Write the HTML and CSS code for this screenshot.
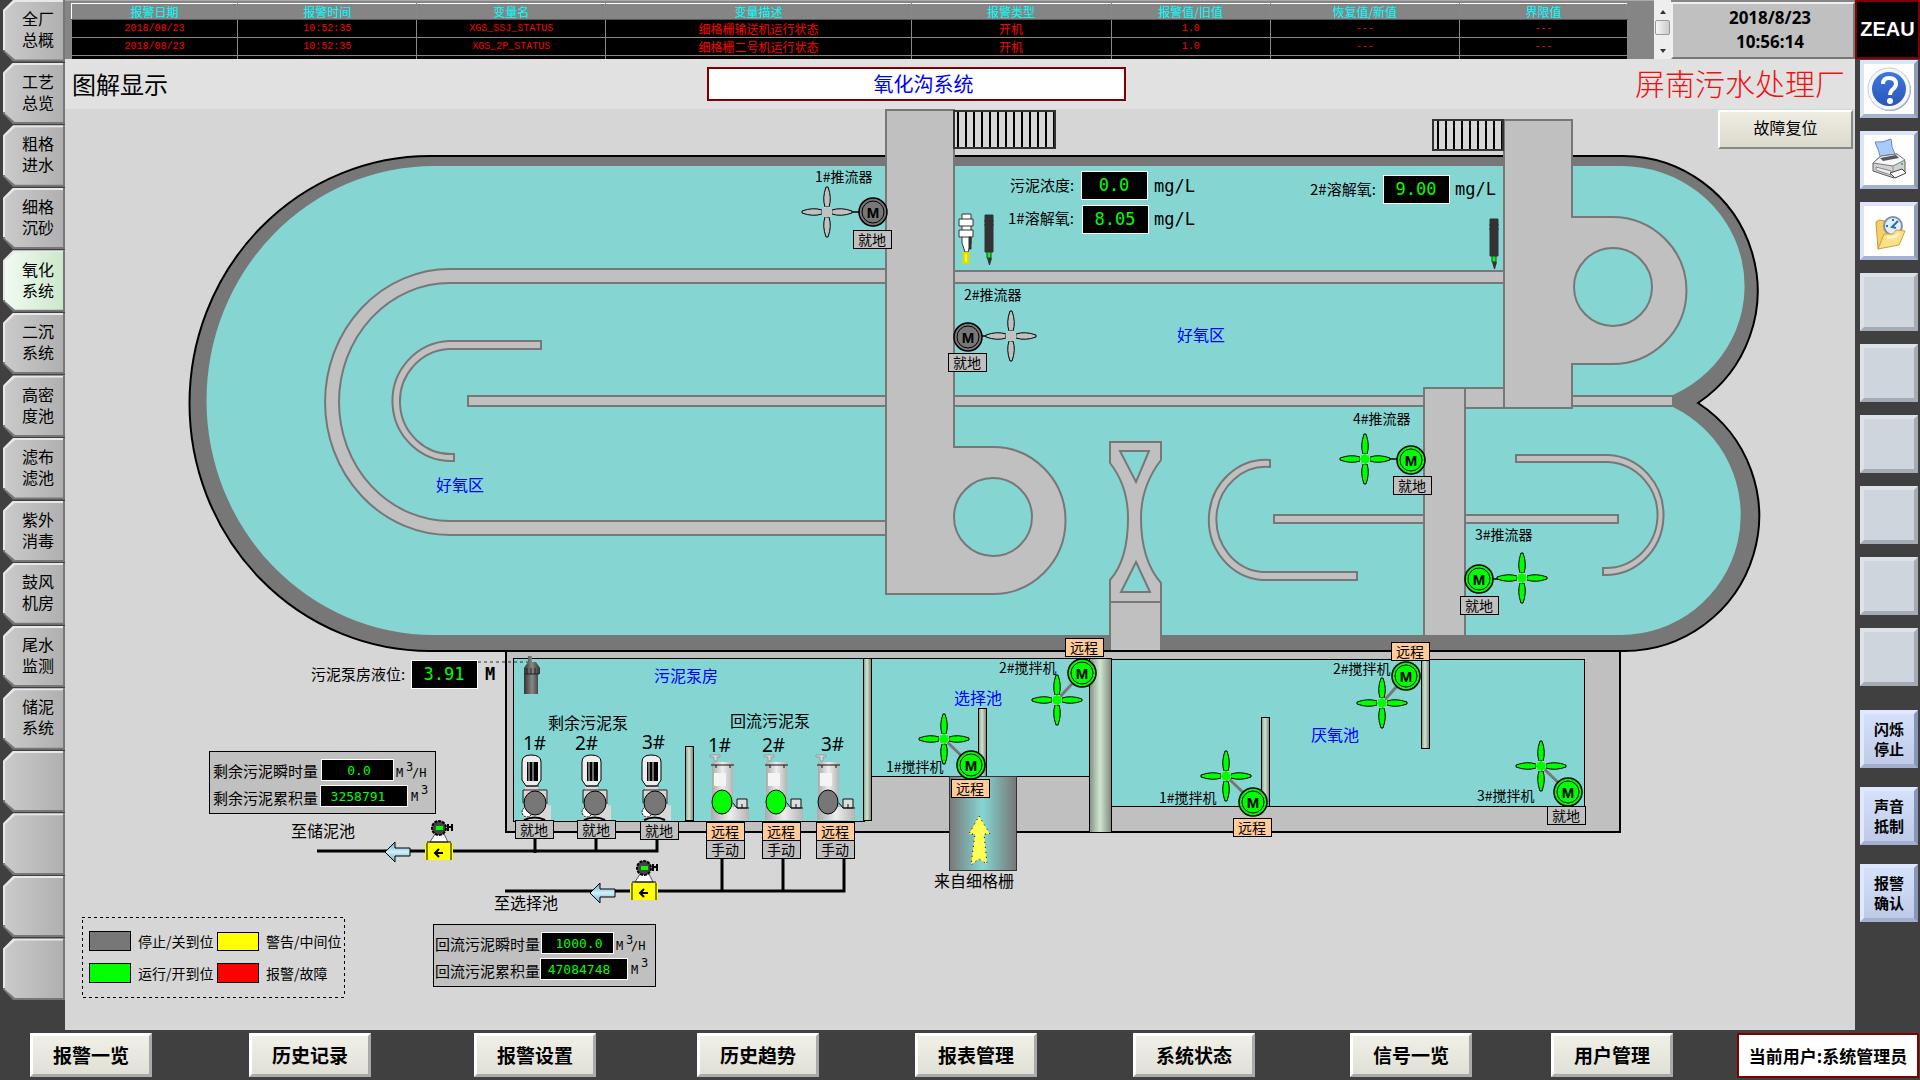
FILE: index.html
```html
<!DOCTYPE html>
<html lang="zh-CN">
<head>
<meta charset="utf-8">
<title>氧化沟系统</title>
<link rel="stylesheet" href="styles.css">
</head>
<body>
<nav class="tabs">
<a href="#"><span>全厂<br>总概</span></a>
<a href="#"><span>工艺<br>总览</span></a>
<a href="#"><span>粗格<br>进水</span></a>
<a href="#"><span>细格<br>沉砂</span></a>
<a href="#" class="active"><span>氧化<br>系统</span></a>
<a href="#"><span>二沉<br>系统</span></a>
<a href="#"><span>高密<br>度池</span></a>
<a href="#"><span>滤布<br>滤池</span></a>
<a href="#"><span>紫外<br>消毒</span></a>
<a href="#"><span>鼓风<br>机房</span></a>
<a href="#"><span>尾水<br>监测</span></a>
<a href="#"><span>储泥<br>系统</span></a>
<a href="#"><span></span></a>
<a href="#"><span></span></a>
<a href="#"><span></span></a>
<a href="#"><span></span></a>
</nav>

<header class="top">
<div class="alarms">
<table>
<colgroup><col class="c1"><col class="c2"><col class="c3"><col class="c4"><col class="c5"><col class="c6"><col class="c7"><col class="c8"></colgroup>
<thead>
<tr><th>报警日期</th><th>报警时间</th><th>变量名</th><th>变量描述</th><th>报警类型</th><th>报警值/旧值</th><th>恢复值/新值</th><th>界限值</th></tr>
</thead>
<tbody>
<tr><td>2018/08/23</td><td>10:52:35</td><td>XGS_SSJ_STATUS</td><td class="zh">细格栅输送机运行状态</td><td class="zh">开机</td><td>1.0</td><td>---</td><td>---</td></tr>
<tr><td>2018/08/23</td><td>10:52:35</td><td>XGS_2P_STATUS</td><td class="zh">细格栅二号机运行状态</td><td class="zh">开机</td><td>1.0</td><td>---</td><td>---</td></tr>
<tr><td>2018/08/23</td><td>10:52:35</td><td>XGS_1P_STATUS</td><td class="zh">细格栅一号机运行状态</td><td class="zh">开机</td><td>1.0</td><td>---</td><td>---</td></tr>
</tbody>
</table>
</div>
<div class="scroll"><i class="up"></i><i class="thumb"></i><i class="down"></i></div>
<div class="clock">2018/8/23<br>10:56:14</div>
</header>

<aside class="side">
<div class="logo">ZEAU</div>
<div class="tools">
<button class="pic" aria-label="帮助">
<svg viewBox="0 0 48 48">
<defs><linearGradient id="hb" x2="0" y2="1"><stop offset="0" stop-color="#3c78e0"/><stop offset="1" stop-color="#2b56b8"/></linearGradient></defs>
<circle cx="25" cy="25" r="21" fill="#9aa0ac"/>
<circle cx="24" cy="24" r="21" fill="#f4f7fc" stroke="#c4ccdc"/>
<circle cx="24" cy="24" r="17" fill="url(#hb)"/>
<path d="M18 19 Q18 13 24 13 Q31 13 31 19 Q31 22 27 25 Q25 27 25 30" fill="none" stroke="#fff" stroke-width="4"/>
<circle cx="25" cy="36" r="3" fill="#fff"/>
</svg>
</button>
<button class="pic" aria-label="打印">
<svg viewBox="0 0 48 48">
<path d="M10 6 Q18 7 26 3 Q26 12 31 20 L16 24 Q14 14 10 6Z" fill="#a9cbfa" stroke="#5f86d0"/>
<path d="M8 27 L16 20 L32 18 L40 25 V36 L29 42 L8 35Z" fill="#d0d1d5" stroke="#5c5e62"/>
<path d="M8 27 L16 20 L32 18 L40 24 L28 30Z" fill="#f6f6f7" stroke="#77797d"/>
<path d="M15 22 L31 19 L34 22 L18 25Z" fill="#55585e"/>
<path d="M28 30 V41" stroke="#8d8f94"/>
<path d="M11 31 L26 35 V39 L11 34Z" fill="#eeeef0" stroke="#888"/>
<path d="M25 37 L37 33 L41 37 L30 42Z" fill="#fff" stroke="#444"/>
<circle cx="37" cy="28" r="1" fill="#1fb53a"/>
</svg>
</button>
<button class="pic" aria-label="历史">
<svg viewBox="0 0 48 48">
<path d="M11 15 L14 13 L20 14 L21 17 L33 15 V32 L13 42Z" fill="#f5d069" stroke="#c99a2c"/>
<circle cx="28" cy="19" r="9" fill="#dff0fb" stroke="#7f90a4" stroke-width="2"/>
<path d="M33 14 L27 20 L31 21 M28 12 V14 M21 19 H23" fill="none" stroke="#2a6fae" stroke-width="2"/>
<path d="M13 42 L19 27 L28 27 L31 23 L40 24 L34 38Z" fill="#fbe08a" stroke="#d0a137"/>
<path d="M22 30 Q30 32 34 26" fill="none" stroke="#fff4c8" stroke-width="3"/>
</svg>
</button>
<button></button>
<button></button>
<button></button>
<button></button>
<button></button>
<button></button>
</div>
<div class="tools acts">
<button class="blue">闪烁<br>停止</button>
<button class="blue">声音<br>抵制</button>
<button class="blue">报警<br>确认</button>
</div>
</aside>

<main class="screen">
<div class="bar">
<h1>图解显示</h1>
<h2>氧化沟系统</h2>
<p>屏南污水处理厂</p>
</div>
<button class="reset">故障复位</button>

<svg class="plant" viewBox="65 109 1790 921">
<defs>
<linearGradient id="post"><stop offset="0" stop-color="#808a80"/><stop offset=".5" stop-color="#d0e8d0"/><stop offset="1" stop-color="#808a80"/></linearGradient>
<linearGradient id="inlet"><stop offset="0" stop-color="#777"/><stop offset=".5" stop-color="#85d6d3"/><stop offset="1" stop-color="#777"/></linearGradient>
<linearGradient id="steel"><stop offset="0" stop-color="#aaa"/><stop offset=".5" stop-color="#eee"/><stop offset="1" stop-color="#b4b4b4"/></linearGradient>
<linearGradient id="probe"><stop offset="0" stop-color="#333"/><stop offset=".5" stop-color="#888"/><stop offset="1" stop-color="#333"/></linearGradient>
<linearGradient id="arr" x2="0" y2="1"><stop offset="0" stop-color="#5aa3c4"/><stop offset=".5" stop-color="#d2f1fa"/><stop offset="1" stop-color="#5aa3c4"/></linearGradient>
<pattern id="grate" x="957" y="0" width="8" height="40" patternUnits="userSpaceOnUse"><path d="M1 0V40" stroke="#000" stroke-width="2"/></pattern>

<g id="blade"><path d="M-2 -5 Q-5 -14 -1 -25 H1 Q5 -14 2 -5Z" stroke="#000"/></g>
<g id="fan">
<use href="#blade"/><use href="#blade" transform="rotate(90)"/><use href="#blade" transform="rotate(180)"/><use href="#blade" transform="rotate(270)"/>
<circle r="5" stroke="#cfe8cf" stroke-dasharray="2 2"/>
</g>
<g id="motor">
<circle r="14" stroke="#000" stroke-width="1.5"/>
<circle r="11" stroke="#000"/>
</g>
<g id="pumpA">
<path d="M525 786 H538 V790 H548 V806 L551 805 V820 H524 V790 H525Z" fill="#d8d8d8"/>
<path d="M522 762 Q522 755 531 755 Q541 755 541 762 V780 L537 786 H526 L522 780Z" fill="#eee" stroke="#000"/>
<path d="M527 762 H538 V781 H527Z" fill="#000"/>
<path d="M529 762 V781 M533 762 V781" stroke="#ddd"/>
<path d="M523 803 V790 H547 V804 M526 786 H539" fill="none" stroke="#222"/>
<circle cx="527" cy="812" r="5" fill="#fff" stroke="#000" stroke-dasharray="2 1"/>
<path d="M524 820 Q535 815 545 820" fill="none" stroke="#000" stroke-width="2"/>
<ellipse cx="535" cy="803" rx="11" ry="12" stroke="#000"/>
</g>
<g id="pumpB">
<path d="M710 755 H720 V757 H717 V761 H714 V757 H710Z" fill="#ddd" stroke="#999"/>
<path d="M712 762 H733 V820 H712Z" fill="url(#steel)"/>
<path d="M711 765 H734 M716 765 V768 M730 765 V768" stroke="#111"/>
<path d="M714 773 H726 V786 H714Z" fill="#f4f4f4"/>
<path d="M711 807 H749 V820 H711Z" fill="url(#steel)"/>
<path d="M737 799 H747 V808 H737Z" fill="#ddd" stroke="#111"/>
<path d="M733 803 L737 808 H749 M742 804 V808" fill="none" stroke="#111"/>
<ellipse cx="722" cy="802" rx="10" ry="12" stroke="#000"/>
</g>
<g id="meter">
<path d="M-4 -18 H5 L9 -10 H-9Z" fill="#fff" stroke="#555"/>
<circle cx="0" cy="-24" r="7" fill="#444" stroke="#000" stroke-width="2" stroke-dasharray="3 1"/>
<rect x="-3" y="-26" width="7" height="4" fill="#0f0"/>
<path d="M9 -28 V-21 M13 -28 V-21 M9 -25 H13" stroke="#000" stroke-width="2"/>
<rect x="-14" y="-9" width="28" height="17" fill="#ff0"/>
<path d="M-12 -9 V8 M12 -9 V8 M-12 -10 H12" stroke="#000"/>
<path d="M4 1 H-4 M0 -3 L-4 1 L0 5" fill="none" stroke="#000" stroke-width="2"/>
</g>
<g id="flow"><path d="M0 0 L10 -10 V-4 H25 V4 H10 V10Z" fill="url(#arr)" stroke="#000"/></g>
<g id="do">
<path d="M-4 0 H4 V37 H-4Z M-5 6 H5 M-5 10 H5" fill="#333" stroke="#333"/>
<path d="M-2 37 H2 V43 H-2Z" fill="#0f0" stroke="#333"/>
<path d="M-2 43 H3 L1 50 H0Z" fill="#333"/>
</g>
</defs>

<!-- lower basins -->
<rect x="506" y="650" width="1114" height="182" fill="#c0c0c0" stroke="#000" stroke-width="2"/>
<rect class="basin" x="513" y="658" width="351" height="163"/>
<rect class="basin" x="871" y="658" width="218" height="118"/>
<rect class="basin" x="1111" y="659" width="473" height="147"/>

<!-- oxidation ditch -->
<path d="M430 156 H1623 A135 135 0 0 1 1698 403 A135 135 0 0 1 1623 651 H430 A240 247 0 0 1 430 156Z" fill="#777" stroke="#000" stroke-width="2"/>
<path d="M434 166 H1621 A123 120 0 0 1 1673 395 V407 A120 120 0 0 1 1620 635 H434 A227 234 0 0 1 434 166Z" fill="#85d6d3"/>
<g class="wall">
<path d="M886 269 H450 A125 133 0 0 0 450 535 H886 V521 H450 A111 119 0 0 1 450 283 H886Z"/>
<path d="M541 341 H449 A59 60 0 0 0 454 461 V454 A51 52 0 0 1 449 349 H541Z"/>
<path d="M468 396 H1673 V406 H468Z"/>
<path d="M954 271 H1504 V283 H954Z"/>
<path d="M1270 460 A57 60 0 0 0 1262 580 H1357 V572 H1262 A49 52 0 0 1 1270 467Z"/>
<path d="M1274 515 H1618 V523 H1274Z"/>
<path d="M1516 455 H1608 A58 60 0 0 1 1603 575 V568 A52 53 0 0 0 1608 462 H1516Z"/>
<path d="M886 110 H954 V447 H993 A72 73 0 0 1 993 594 H886Z"/>
<path d="M1465 388 H1504 V408 H1465Z"/>
<path d="M1504 120 H1572 V217 H1612 A74 73 0 0 1 1612 364 H1572 V408 H1504Z"/>
<path d="M1424 388 H1465 V636 H1424Z"/>
<path d="M1110 442 H1161 V460 Q1141 486 1141 518 Q1141 560 1161 583 V650 H1110 V580 Q1128 560 1128 518 Q1128 486 1110 463Z"/>
<path d="M1110 602 H1161"/>
</g>
<path d="M1504 388 V408 M1505 408 H1572" stroke="#777" stroke-width="2"/>
<path d="M1571 219 V363" stroke="#c0c0c0" stroke-width="4"/>
<path d="M1111 636 H1160 V650 H1111Z" fill="#c0c0c0"/>
<path d="M1109 636 V650 M1162 636 V650 M1424 636 H1465" stroke="#777" stroke-width="2"/>
<path d="M430 651 H1623" stroke="#000" stroke-width="2"/>
<g class="hole">
<circle cx="993" cy="517" r="39"/>
<circle cx="1613" cy="287" r="39"/>
<path d="M1120 451 H1149 L1136 482Z"/>
<path d="M1136 562 L1150 592 H1121Z"/>
</g>
<path d="M954 111 H1055 V148 H954Z M1433 120 H1503 V150 H1433Z" fill="url(#grate)" stroke="#333" stroke-width="2"/>

<!-- partitions -->
<g class="post">
<rect x="863" y="658" width="8" height="162"/>
<rect x="685" y="746" width="8" height="74"/>
<rect x="978" y="708" width="8" height="68"/>
<rect x="1089" y="658" width="22" height="174"/>
<rect x="1261" y="717" width="8" height="89"/>
<rect x="1421" y="659" width="8" height="89"/>
</g>
<rect x="949" y="776" width="67" height="94" fill="url(#inlet)" stroke="#333"/>
<path d="M979 816 L990 834 H984 L987 864 L979 859 L971 865 L975 834 H969Z" fill="#ff5" stroke="#000" stroke-dasharray="1 4"/>

<!-- pipes -->
<path d="M317 851 H657 V838 M535 838 V853 M596 838 V851" class="pipe"/>
<path d="M505 891 H844 V858 M722 858 V891 M783 858 V891" class="pipe"/>
<use href="#flow" x="385" y="852"/>
<use href="#flow" x="590" y="893"/>
<use href="#meter" x="439" y="852"/>
<use href="#meter" x="644" y="892"/>

<!-- level sensor -->
<path d="M478 662 H530" stroke="#333" stroke-dasharray="3 3"/>
<path d="M528 656 H532 V662 H536 L540 668 V674 H538 V694 H524 V674 H524 V668 L528 662Z" fill="url(#probe)"/>
<path d="M525 674 H539 M527 668 V674 M531 668 V674 M535 668 V674" stroke="#222"/>

<!-- probes -->
<use href="#do" x="989" y="215"/>
<use href="#do" x="1494" y="219"/>
<g stroke="#333">
<path d="M962 214 H971 V243 L968 252 H965 L962 243Z" fill="#fff"/>
<path d="M959 219 H973 V226 H959Z M959 230 H973 V237 H959Z" fill="#fff"/>
<path d="M969 237 H971 V249 H969Z" fill="#333"/>
<path d="M962 253 H970 M962 263 H970 M964 253 V263 H968 V253" fill="#ff0" stroke="#dd0" stroke-width="2"/>
</g>

<!-- pumps -->
<g class="off"><use href="#pumpA"/><use href="#pumpA" x="60"/><use href="#pumpA" x="120"/></g>
<g class="on"><use href="#pumpB"/><use href="#pumpB" x="54"/></g>
<g class="off"><use href="#pumpB" x="106"/></g>

<!-- impellers and mixers -->
<path d="M845 212 H860 M982 336 H994 M1383 459 H1397 M1493 579 H1522" stroke="#333" stroke-width="2"/>
<g class="idle"><use href="#fan" x="827" y="212"/><use href="#fan" x="1011" y="336"/></g>
<g class="off"><use href="#motor" x="873" y="212"/><use href="#motor" x="968" y="337"/></g>
<path d="M944 739 L971 765 M1057 700 L1082 673 M1226 776 L1253 802 M1382 703 L1406 676 M1541 766 L1568 792" stroke="#777" stroke-width="3"/>
<g class="on">
<use href="#fan" x="1365" y="459"/><use href="#motor" x="1411" y="460"/>
<use href="#fan" x="1522" y="578"/><use href="#motor" x="1479" y="579"/>
<use href="#fan" x="944" y="739"/><use href="#motor" x="971" y="765"/>
<use href="#fan" x="1057" y="700"/><use href="#motor" x="1082" y="673"/>
<use href="#fan" x="1226" y="776"/><use href="#motor" x="1253" y="802"/>
<use href="#fan" x="1382" y="703"/><use href="#motor" x="1406" y="676"/>
<use href="#fan" x="1541" y="766"/><use href="#motor" x="1568" y="792"/>
</g>
<g class="m">
<text x="873" y="212">M</text><text x="968" y="337">M</text><text x="1411" y="460">M</text><text x="1479" y="579">M</text>
<text x="971" y="765">M</text><text x="1082" y="673">M</text><text x="1253" y="802">M</text><text x="1406" y="676">M</text><text x="1568" y="792">M</text>
</g>

<!-- local / remote tags -->
<g class="tag">
<rect x="853" y="230" width="38" height="18"/><text x="872" y="239">就地</text>
<rect x="948" y="353" width="38" height="18"/><text x="967" y="362">就地</text>
<rect x="1393" y="476" width="38" height="18"/><text x="1412" y="485">就地</text>
<rect x="1460" y="596" width="38" height="18"/><text x="1479" y="605">就地</text>
<rect x="1547" y="806" width="38" height="18"/><text x="1566" y="815">就地</text>
<rect x="515" y="820" width="38" height="18"/><text x="534" y="829">就地</text>
<rect x="577" y="820" width="38" height="18"/><text x="596" y="829">就地</text>
<rect x="640" y="821" width="38" height="18"/><text x="659" y="830">就地</text>
<rect x="706" y="840" width="38" height="18"/><text x="725" y="849">手动</text>
<rect x="762" y="840" width="38" height="18"/><text x="781" y="849">手动</text>
<rect x="816" y="840" width="38" height="18"/><text x="835" y="849">手动</text>
</g>
<g class="tag remote">
<rect x="1065" y="638" width="38" height="18"/><text x="1084" y="647">远程</text>
<rect x="1391" y="642" width="38" height="18"/><text x="1410" y="651">远程</text>
<rect x="951" y="779" width="38" height="18"/><text x="970" y="788">远程</text>
<rect x="1233" y="818" width="38" height="18"/><text x="1252" y="827">远程</text>
<rect x="706" y="822" width="38" height="18"/><text x="725" y="831">远程</text>
<rect x="762" y="822" width="38" height="18"/><text x="781" y="831">远程</text>
<rect x="816" y="822" width="38" height="18"/><text x="835" y="831">远程</text>
</g>

<!-- device names -->
<g class="name">
<text x="815" y="176">1#推流器</text>
<text x="964" y="294">2#推流器</text>
<text x="1353" y="418">4#推流器</text>
<text x="1475" y="534">3#推流器</text>
<text x="999" y="667">2#搅拌机</text>
<text x="886" y="766">1#搅拌机</text>
<text x="1333" y="668">2#搅拌机</text>
<text x="1159" y="797">1#搅拌机</text>
<text x="1477" y="795">3#搅拌机</text>
</g>
<g class="zone">
<text x="1177" y="334">好氧区</text>
<text x="436" y="484">好氧区</text>
<text x="654" y="675">污泥泵房</text>
<text x="954" y="697">选择池</text>
<text x="1311" y="734">厌氧池</text>
</g>
<g class="place">
<text x="548" y="722">剩余污泥泵</text>
<text x="730" y="720">回流污泥泵</text>
<text x="291" y="830">至储泥池</text>
<text x="494" y="902">至选择池</text>
<text x="934" y="880">来自细格栅</text>
</g>
<g class="num">
<text x="523" y="743">1#</text><text x="575" y="743">2#</text><text x="642" y="742">3#</text>
<text x="708" y="745">1#</text><text x="762" y="745">2#</text><text x="821" y="744">3#</text>
</g>

<!-- analog values -->
<g class="label">
<text x="1010" y="184">污泥浓度:</text>
<text x="1008" y="217">1#溶解氧:</text>
<text x="1310" y="188">2#溶解氧:</text>
<text x="311" y="673">污泥泵房液位:</text>
</g>
<g class="unit">
<text x="1154" y="186">mg/L</text>
<text x="1154" y="219">mg/L</text>
<text x="1455" y="189">mg/L</text>
<text x="485" y="674" class="b">M</text>
</g>
<g class="lcd">
<rect x="1081" y="171" width="66" height="28"/><text x="1114" y="185">0.0</text>
<rect x="1082" y="205" width="66" height="28"/><text x="1115" y="219">8.05</text>
<rect x="1383" y="175" width="66" height="28"/><text x="1416" y="189">9.00</text>
<rect x="411" y="660" width="66" height="28"/><text x="444" y="674">3.91</text>
</g>

<!-- sludge flow totals -->
<g class="box">
<rect x="209" y="751" width="226" height="62"/>
<rect x="433" y="924" width="222" height="62"/>
</g>
<g class="label">
<text x="213" y="770">剩余污泥瞬时量</text>
<text x="213" y="797">剩余污泥累积量</text>
<text x="435" y="943">回流污泥瞬时量</text>
<text x="435" y="970">回流污泥累积量</text>
</g>
<g class="lcd small">
<rect x="321" y="759" width="72" height="21"/><text x="359" y="770">0.0</text>
<rect x="320" y="785" width="87" height="21"/><text x="358" y="796">3258791</text>
<rect x="541" y="932" width="72" height="21"/><text x="579" y="943">1000.0</text>
<rect x="540" y="958" width="87" height="21"/><text x="579" y="969">47084748</text>
</g>
<g class="flowunit">
<text x="396" y="773">M</text><text x="406" y="767">3</text><text x="412" y="773">/H</text>
<text x="411" y="797">M</text><text x="421" y="790">3</text>
<text x="616" y="946">M</text><text x="626" y="940">3</text><text x="631" y="946">/H</text>
<text x="631" y="970">M</text><text x="641" y="963">3</text>
</g>

<!-- legend -->
<rect x="82" y="917" width="262" height="80" fill="none" stroke="#000" stroke-dasharray="3 3"/>
<g stroke="#000">
<rect x="89" y="931" width="41" height="19" fill="#777"/>
<rect x="89" y="963" width="41" height="19" fill="#0f0"/>
<rect x="217" y="932" width="41" height="18" fill="#ff0"/>
<rect x="217" y="963" width="41" height="19" fill="#f00"/>
</g>
<g class="name">
<text x="138" y="941">停止/关到位</text>
<text x="138" y="973">运行/开到位</text>
<text x="266" y="941">警告/中间位</text>
<text x="266" y="973">报警/故障</text>
</g>
</svg>
</main>

<footer class="menu">
<button>报警一览</button>
<button>历史记录</button>
<button>报警设置</button>
<button>历史趋势</button>
<button>报表管理</button>
<button>系统状态</button>
<button>信号一览</button>
<button>用户管理</button>
<div class="user">当前用户:系统管理员</div>
</footer>
</body>
</html>
```
FILE: styles.css
```css
* { box-sizing: border-box; }
body {
margin: 0; min-height: 100vh; background: #404040; color: #000;
font-family: "Noto Sans CJK SC", "Liberation Sans", sans-serif; font-size: 16px;
display: grid; grid-template-columns: 65px 1fr 65px; grid-template-rows: 59px 1fr 50px;
grid-template-areas: "tabs top side" "tabs screen side" "menu menu menu";
}
button { font-family: inherit; color: #000; padding: 0; }

/* left tabs */
.tabs { grid-area: tabs; display: flex; flex-direction: column; gap: 1px; padding: 0 0 30px 3px; }
.tabs a {
flex: 1; padding: 2px; display: flex; color: #000; text-decoration: none;
background: linear-gradient(to right, transparent 60px, #777 60px), linear-gradient(#e8e8e8 80%, #777 80%);
clip-path: polygon(10px 0, 100% 0, 100% 100%, 10px 100%, 0 51px, 0 10px);
}
.tabs span {
flex: 1; padding: 0 0 3px 8px; display: flex; align-items: center; justify-content: center;
font-size: 16px; line-height: 21px; background: linear-gradient(to right, #cacaca, #b0b0b0);
clip-path: polygon(10px 0, 100% 0, 100% 100%, 10px 100%, 0 49px, 0 9px);
}
.tabs .active span { background: linear-gradient(to right, #f2faf2, #cbe8cb); }

/* alarm list */
.top { grid-area: top; display: flex; height: 59px; overflow: hidden; background: #858585; }
.alarms { flex: 1; overflow: hidden; padding: 2px 26px 0 6px; height: 59px; border-top: 1px solid #aaa; }
.alarms table { width: 100%; table-layout: fixed; border-collapse: collapse; background: #000; }
.alarms th, .alarms td { padding: 0; border: 1px solid #888; text-align: center; overflow: hidden; white-space: nowrap; }
.alarms th { height: 16px; font-size: 12px; line-height: 14px; font-weight: 400; color: #0ff; background: #858585; border-color: #fff #888 #555 #fff; }
.alarms td { height: 18px; font-family: "Liberation Mono", monospace; font-size: 10px; line-height: 15px; color: #f00; }
.alarms td.zh { font-family: "Noto Sans CJK SC", sans-serif; font-size: 12px; }
.c1 { width: 166px; } .c2 { width: 179px; } .c3 { width: 189px; } .c4 { width: 305px; }
.c5 { width: 200px; } .c6 { width: 159px; } .c7 { width: 189px; } .c8 { width: 168px; }
.scroll { width: 17px; background: #eee; display: flex; flex-direction: column; align-items: center; justify-content: space-between; padding: 10px 0 6px; }
.scroll i { display: block; }
.up { border: 3px solid transparent; border-top: 0; border-bottom: 4px solid #333; }
.down { border: 3px solid transparent; border-bottom: 0; border-top: 4px solid #333; }
.thumb { width: 15px; height: 15px; border: 1px solid #999; border-radius: 2px; background: linear-gradient(to right, #f6f6f6, #ccc); margin-bottom: 8px; }
.clock {
width: 184px; margin-top: 2px; border: 2px solid; border-color: #f0f0f0 #777 #777 #f0f0f0; background: #c0c0c0;
font-family: "Noto Sans", sans-serif; font-size: 17px; line-height: 24px; font-weight: 700; text-align: center; padding: 2px 0 0 14px;
}

/* right tools */
.side { grid-area: side; }
.logo { height: 59px; border: 2px solid #800000; background: #000; color: #fff; font: 700 20px/54px "Liberation Sans", sans-serif; text-align: center; }
.tools { display: flex; flex-direction: column; gap: 13px; padding: 1px 2px 0 5px; }
.tools button { height: 58px; border: 4px solid; border-color: #dde2e8 #a4abb4 #a4abb4 #dde2e8; background: #ced5dd; }
.tools .pic { background: #fff; border-color: #dbe4fb #8e9bbb #a5b2d2 #dbe4fb; display: flex; align-items: center; justify-content: center; }
.tools .pic svg { width: 48px; height: 48px; }
.acts { gap: 19px; padding-top: 24px; }
.tools .blue { border-color: #dfe8ff #8795b8 #a3b0d0 #dfe8ff; background: linear-gradient(#d5e0fb, #bfcae6); font-size: 15px; line-height: 20px; font-weight: 700; }

/* process screen */
.screen { grid-area: screen; background: #d6d6d6; position: relative; }
.bar { height: 50px; background: #e1e1e1; display: grid; grid-template-columns: 642px 419px 1fr; align-items: center; padding: 0 10px 0 0; }
.bar h1 { margin: 0 0 0 7px; font-size: 24px; font-weight: 400; line-height: 34px; }
.bar h2 { margin: 0; border: 2px solid #800000; background: #fff; color: #00f; font-size: 20px; font-weight: 400; line-height: 30px; padding-left: 14px; text-align: center; }
.bar p { margin: 0; padding-bottom: 4px; text-align: right; color: #f01010; font-size: 30px; font-weight: 300; line-height: 40px; }
.reset { position: absolute; right: 2px; top: 51px; width: 135px; height: 39px; border: 2px solid; border-color: #fff #888 #888 #fff; background: linear-gradient(#efece2, #dcd9cd); font-size: 16px; line-height: 24px; padding-bottom: 6px; }

.plant { display: block; width: 100%; }
.plant text { dominant-baseline: central; fill: #000; }
.plant rect { shape-rendering: crispEdges; }
.basin { fill: #85d6d3; stroke: #000; }
.wall path { fill: #c0c0c0; stroke: #777; stroke-width: 2px; }
.hole * { fill: #85d6d3; stroke: #777; stroke-width: 2px; }
.post rect { fill: url(#post); stroke: #000; }
.pipe { fill: none; stroke: #000; stroke-width: 3px; }
.on { fill: #0f0; }
.off { fill: #777; }
.idle { fill: #c0c0c0; }
.m text { font: 700 15px "Liberation Sans", sans-serif; text-anchor: middle; }
.tag rect { fill: #c0c0c0; stroke: #000; }
.tag text { font-size: 14px; text-anchor: middle; }
.remote rect { fill: #fc9; }
.name { font-size: 14px; }
.label { font-size: 15px; }
.place { font-size: 16px; }
.zone text { font-size: 16px; fill: #00f; }
.num { font-family: "Noto Sans", sans-serif; font-size: 19px; }
.unit { font-family: "DejaVu Sans Mono", monospace; font-size: 17px; }
.unit .b { font-weight: 700; }
.lcd rect { fill: #000; stroke: #fff; }
.lcd text { font-family: "DejaVu Sans Mono", monospace; font-size: 17px; fill: #0f0; text-anchor: middle; }
.small text { font-size: 13px; }
.box rect { fill: #c0c0c0; stroke: #000; }
.flowunit { font-family: "DejaVu Sans Mono", monospace; font-size: 12px; }

/* bottom menu */
.menu { grid-area: menu; display: grid; grid-template-columns: 219fr 225fr 223fr 218fr 218fr 217fr 201fr 186fr 182fr; align-items: center; padding: 0 1px 0 30px; }
.menu button { width: 122px; height: 44px; border: 3px solid; border-color: #fff #aaa #aaa #fff; background: linear-gradient(#f0f0e6, #e0e0d6); font-size: 19px; font-weight: 700; line-height: 30px; }
.user { height: 45px; border: 2px solid #800000; background: #fff; font-size: 17px; font-weight: 700; line-height: 42px; text-align: center; white-space: nowrap; }
```
